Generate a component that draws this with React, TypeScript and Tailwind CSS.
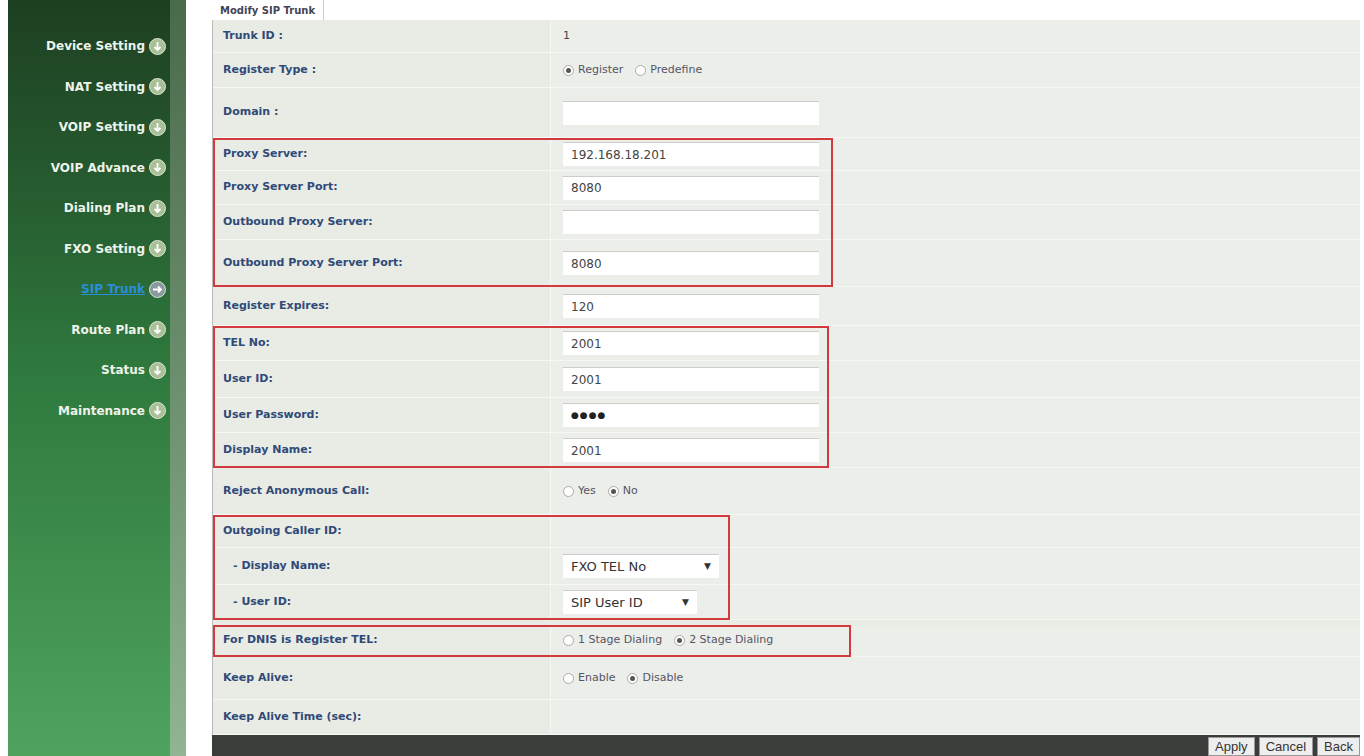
import React from 'react'

const menu = ['Device Setting', 'NAT Setting', 'VOIP Setting', 'VOIP Advance', 'Dialing Plan', 'FXO Setting', 'SIP Trunk', 'Route Plan', 'Status', 'Maintenance']

function Arrow({ active }: { active?: boolean }) {
  return (
    <svg width="17" height="17" viewBox="0 0 17 17">
      <circle cx="8.5" cy="8.5" r="8" fill={active ? '#8a9aa0' : '#a9bf98'} stroke="#d9e6cf" strokeWidth="1" />
      {active ? (
        <path d="M4 8.5h8M9 5.5l3 3-3 3" stroke="#fff" strokeWidth="1.8" fill="none" />
      ) : (
        <path d="M8.5 4v8M5.5 9l3 3 3-3" stroke="#fff" strokeWidth="1.8" fill="none" />
      )}
    </svg>
  )
}

function Input({ value, pwd }: { value?: string; pwd?: boolean }) {
  return (
    <div className="w-[256px] h-[24px] bg-white border-t border-[#ccc] px-2 flex items-center text-[12px] text-[#444]" style={{ fontFamily: 'Verdana, "DejaVu Sans", sans-serif' }}>
      {pwd ? <span className="text-[9px] tracking-[1px] text-[#222]">●●●●</span> : value}
    </div>
  )
}

function Radio({ on }: { on?: boolean }) {
  return (
    <span className="inline-flex w-[11px] h-[11px] rounded-full border border-[#aaa] bg-white items-center justify-center mr-1">
      {on && <span className="w-[5px] h-[5px] rounded-full bg-[#555]" />}
    </span>
  )
}

function Radios({ items, sel }: { items: string[]; sel: number }) {
  return (
    <div className="flex items-center gap-3 text-[11px] text-[#556]">
      {items.map((t, i) => (
        <span key={t} className="flex items-center"><Radio on={i === sel} />{t}</span>
      ))}
    </div>
  )
}

function Select({ value, w }: { value: string; w: string }) {
  return (
    <div className={`${w} h-[24px] bg-white border-t border-[#ccc] px-2 flex items-center justify-between text-[13px] text-[#333]`}>
      {value}<span className="text-[9px]">▼</span>
    </div>
  )
}

function Row({ label, h, children, indent }: { label: string; h: string; children?: React.ReactNode; indent?: boolean }) {
  return (
    <div className={`flex ${h} border-b border-[#f7f8f5]`}>
      <div className={`w-[338px] flex items-center ${indent ? 'pl-[20px]' : 'pl-[10px]'} text-[11px] font-bold text-[#2f4a78] border-r border-[#f7f8f5]`}>{label}</div>
      <div className="flex-1 flex items-center pl-[12px] bg-[#eceee9]">{children}</div>
    </div>
  )
}

function Box({ w, children }: { w: string; children: React.ReactNode }) {
  return (
    <div className="relative">
      {children}
      <div className={`absolute top-0 bottom-0 left-0 ${w} border-2 border-[#d33a3e] pointer-events-none`} />
    </div>
  )
}

export default function App() {
  return (
    <div className="w-[1364px] h-[756px] bg-white flex overflow-hidden" style={{ fontFamily: 'Verdana, "DejaVu Sans", sans-serif' }}>
      <div className="w-[178px] ml-[8px] h-full flex bg-gradient-to-b from-[#1d3f22] via-[#2f7a3e] to-[#4fa35f]">
        <div className="flex-1 pt-[36px] flex flex-col items-end gap-[20.5px] pr-[4px]">
          {menu.map((m) => (
            <div key={m} className="flex items-center gap-[4px] h-[20px]">
              <span className={`text-[12px] font-bold ${m === 'SIP Trunk' ? 'text-[#2a8fd8] underline' : 'text-[#eef3ea]'}`}>{m}</span>
              <Arrow active={m === 'SIP Trunk'} />
            </div>
          ))}
        </div>
        <div className="w-[16px] h-full bg-gradient-to-b from-[#4a6a4c] to-[#8fb592]" />
      </div>
      <div className="ml-[26px] flex-1 mr-[4px] flex flex-col">
        <div className="h-[20px] flex">
          <div className="px-[8px] border-r border-[#ccc] text-[10px] font-bold text-[#445] flex items-center">Modify SIP Trunk</div>
        </div>
        <div className="flex-1 bg-[#e9ebe5] border-l border-[#bbb]">
          <Row label="Trunk ID :" h="h-[33px]"><span className="text-[11px] text-[#444]">1</span></Row>
          <Row label="Register Type :" h="h-[35px]"><Radios items={['Register', 'Predefine']} sel={0} /></Row>
          <Row label="Domain :" h="h-[50px]"><Input /></Row>
          <Box w="w-[620px]">
            <Row label="Proxy Server:" h="h-[33px]"><Input value="192.168.18.201" /></Row>
            <Row label="Proxy Server Port:" h="h-[34px]"><Input value="8080" /></Row>
            <Row label="Outbound Proxy Server:" h="h-[35px]"><Input /></Row>
            <Row label="Outbound Proxy Server Port:" h="h-[47px]"><Input value="8080" /></Row>
          </Box>
          <Row label="Register Expires:" h="h-[39px]"><Input value="120" /></Row>
          <Box w="w-[616px]">
            <Row label="TEL No:" h="h-[35px]"><Input value="2001" /></Row>
            <Row label="User ID:" h="h-[37px]"><Input value="2001" /></Row>
            <Row label="User Password:" h="h-[35px]"><Input pwd /></Row>
            <Row label="Display Name:" h="h-[35px]"><Input value="2001" /></Row>
          </Box>
          <Row label="Reject Anonymous Call:" h="h-[47px]"><Radios items={['Yes', 'No']} sel={1} /></Row>
          <Box w="w-[517px]">
            <Row label="Outgoing Caller ID:" h="h-[33px]" />
            <Row label="- Display Name:" h="h-[37px]" indent><Select value="FXO TEL No" w="w-[156px]" /></Row>
            <Row label="- User ID:" h="h-[35px]" indent><Select value="SIP User ID" w="w-[134px]" /></Row>
          </Box>
          <div className="h-[5px]" />
          <Box w="w-[638px]">
            <Row label="For DNIS is Register TEL:" h="h-[32px]"><Radios items={['1 Stage Dialing', '2 Stage Dialing']} sel={1} /></Row>
          </Box>
          <Row label="Keep Alive:" h="h-[43px]"><Radios items={['Enable', 'Disable']} sel={1} /></Row>
          <Row label="Keep Alive Time (sec):" h="h-[35px]" />
        </div>
        <div className="h-[21px] bg-[#3a3d3a] flex justify-end items-end gap-[4px]">
          {['Apply', 'Cancel', 'Back'].map((b) => (
            <div key={b} className="h-[19px] px-[6px] bg-[#eee] border border-[#999] text-[13px] text-[#333] flex items-center" style={{ fontFamily: '"Liberation Sans", Arial, sans-serif' }}>{b}</div>
          ))}
        </div>
      </div>
    </div>
  )
}
